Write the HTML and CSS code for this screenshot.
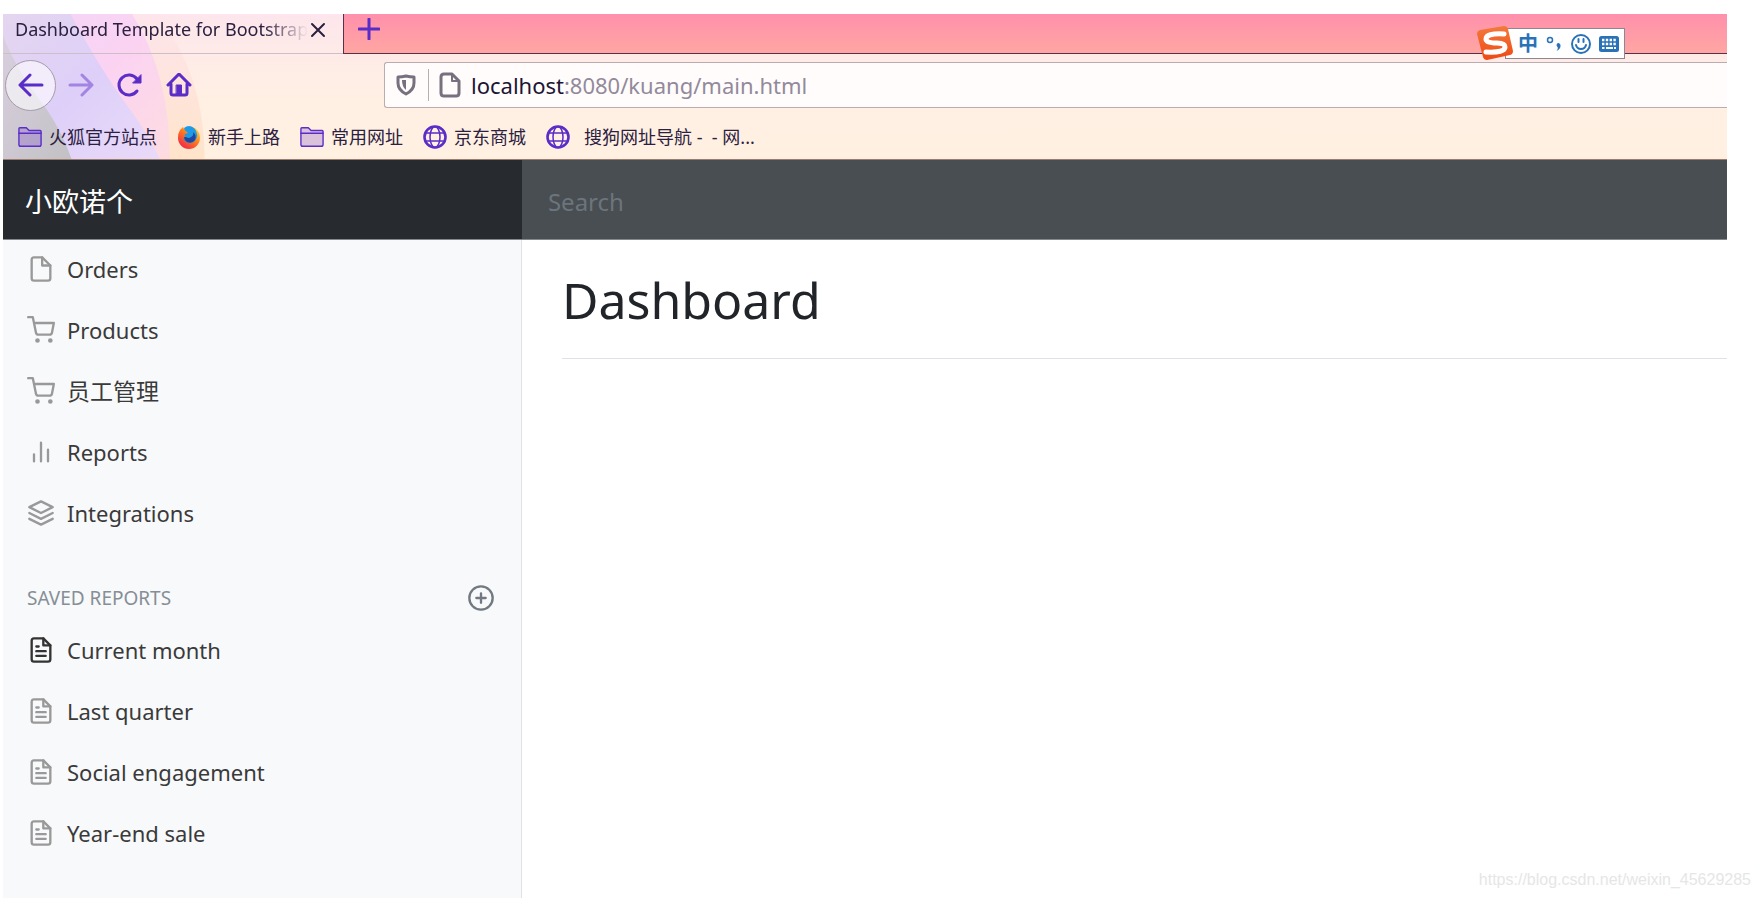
FILE: index.html
```html
<!DOCTYPE html>
<html lang="zh-CN">
<head>
<meta charset="utf-8">
<title>Dashboard Template for Bootstrap</title>
<link rel="stylesheet" href="styles.css">
</head>
<body>
<svg class="sprite" aria-hidden="true">
  <symbol id="file" viewBox="0 0 24 24"><path d="M13 2H6a2 2 0 0 0-2 2v16a2 2 0 0 0 2 2h12a2 2 0 0 0 2-2V9z"/><path d="M13 2v7h7"/></symbol>
  <symbol id="file-text" viewBox="0 0 24 24"><path d="M14 2H6a2 2 0 0 0-2 2v16a2 2 0 0 0 2 2h12a2 2 0 0 0 2-2V8z"/><path d="M14 2v6h6M16 13H8M16 17H8M10 9H8"/></symbol>
  <symbol id="cart" viewBox="0 0 24 24"><circle cx="9" cy="21" r="1"/><circle cx="20" cy="21" r="1"/><path d="M1 1h4l2.700 13.400a2 2 0 0 0 2 1.600h9.700a2 2 0 0 0 2-1.600L23 6H6"/></symbol>
  <symbol id="bars" viewBox="0 0 24 24"><path d="M18 20V10M12 20V4M6 20v-6"/></symbol>
  <symbol id="layers" viewBox="0 0 24 24"><path d="M12 2L2 7l10 5 10-5zM2 17l10 5 10-5M2 12l10 5 10-5"/></symbol>
  <symbol id="plus-circle" viewBox="0 0 24 24"><circle cx="12" cy="12" r="10"/><path d="M12 8v8M8 12h8"/></symbol>
  <symbol id="folder" viewBox="0 0 26 24"><path d="M1 20V3q0-1 1-1h7l3 3h12q1 0 1 1v14q0 2-2 2H3q-2 0-2-2z" fill="#7038c8" fill-opacity=".25"/><path d="M1 8h24"/></symbol>
  <symbol id="globe" viewBox="0 0 24 24"><circle cx="12" cy="12" r="10.500" stroke-width="2.600"/><ellipse cx="12" cy="12" rx="5" ry="10.500"/><path d="M3 8h18M3 16h18"/></symbol>
</svg>

<div class="window">
  <header class="chrome">
    <svg class="theme" viewBox="0 0 400 146" aria-hidden="true">
      <defs>
        <linearGradient id="lav" x2="1" y2="1"><stop offset="0" stop-color="#e4d6ef"/><stop offset=".5" stop-color="#decff9"/><stop offset="1" stop-color="#e9daf9"/></linearGradient>
        <linearGradient id="pink" x2="1" y2="1"><stop offset="0" stop-color="#f2d5f8"/><stop offset=".5" stop-color="#fbd3f2"/><stop offset="1" stop-color="#fddce0"/></linearGradient>
        <linearGradient id="peach" x2="0" y2="1"><stop offset="0" stop-color="#fde5ec"/><stop offset="1" stop-color="#ffe4ca"/></linearGradient>
        <linearGradient id="grey" x2="1" y2="1"><stop offset="0" stop-color="#d9cfdf"/><stop offset="1" stop-color="#c2c1c4"/></linearGradient>
      </defs>
      <path fill="url(#peach)" d="M0 0H155Q203 60 203 146H0z"/>
      <path fill="url(#pink)" d="M0 0H130Q168 60 168 146H0z"/>
      <path fill="url(#lav)" d="M0 0H68Q96 52 122 88Q145 118 158 146H0z"/>
      <path fill="url(#grey)" d="M0 22Q14 58 44 96Q60 120 69 146H0z"/>
    </svg>
    <div class="tabs">
      <div class="tab"><span class="tab-title">Dashboard Template for Bootstrap</span>
        <button class="tab-close" aria-label="Close tab"><svg viewBox="0 0 16 16"><path d="M2 2l12 12M14 2L2 14"/></svg></button>
      </div>
      <div class="tab-strip"><button class="tab-new" aria-label="New tab"><svg viewBox="0 0 22 22"><path d="M11 1v20M1 11h20"/></svg></button></div>
    </div>
    <div class="toolbar">
      <button class="back" aria-label="Back"><svg viewBox="0 0 26 24"><path d="M24 12H3M12 2L2 12l10 10"/></svg></button>
      <button class="nav-button dim" aria-label="Forward"><svg viewBox="0 0 26 24"><path d="M2 12h21M14 2l10 10-10 10"/></svg></button>
      <button class="nav-button" aria-label="Reload"><svg viewBox="0 0 26 24"><path d="M20 18A10 10 0 1 1 20 6"/><path d="M24 2v8h-8z" fill="currentColor" stroke-width="1"/></svg></button>
      <button class="nav-button" aria-label="Home"><svg viewBox="0 0 26 24"><path d="M2 12L13 1l11 11M5 11v9q0 2 2 2h12q2 0 2-2v-9"/><path d="M10.500 12h5v9h-5z" fill="currentColor" stroke-width="1"/></svg></button>
      <div class="address">
        <svg class="shield" viewBox="0 0 20 22"><path d="M10 2Q14 3 18 3v6q0 7-8 11Q2 16 2 9V3q4 0 8-1z"/><path d="M10 6v10Q6 13 6 6z" fill="currentColor" stroke="none"/></svg>
        <span class="divider"></span>
        <svg class="page-icon" viewBox="0 0 22 26"><path d="M13 2H5Q2 2 2 5v16q0 3 3 3h12q3 0 3-3V9z"/><path d="M13 2v7h7" stroke-width="2"/></svg>
        <span class="url"><b>localhost</b>:8080/kuang/main.html</span>
      </div>
    </div>
    <nav class="bookmarks">
      <a href="#"><svg class="line"><use href="#folder"/></svg>火狐官方站点</a>
      <a href="#"><svg viewBox="0 0 24 24"><defs><linearGradient id="fox" x1="1" x2=".2" y2="1"><stop offset="0" stop-color="#ffe83a"/><stop offset=".5" stop-color="#ff7a1c"/><stop offset="1" stop-color="#f0204c"/></linearGradient></defs><path d="M3 5Q1 8 1 13a11 11 0 0 0 22 0q0-6-5-10l-5-1-6 2-1-2z" fill="url(#fox)"/><path d="M7 3Q12-1 17 3q4 4 3 9-2 6-7 6-5 0-7-5l4 1q-3-3-2-5 2 0 3-2-3 0-4-4z" fill="#1d9be8"/><path d="M9 12q3 2 5 0 3-1 2-5 4 3 2 8-3 4-8 2-3-2-3-5z" fill="#21459c"/></svg>新手上路</a>
      <a href="#"><svg class="line"><use href="#folder"/></svg>常用网址</a>
      <a href="#"><svg class="line"><use href="#globe"/></svg>京东商城</a>
      <a href="#" class="spaced"><svg class="line"><use href="#globe"/></svg>搜狗网址导航 -&nbsp; - 网...</a>
    </nav>
  </header>

  <div class="navbar">
    <a class="brand" href="#">小欧诺个</a>
    <input class="search" type="text" placeholder="Search" aria-label="Search">
  </div>

  <div class="content">
    <aside class="sidebar">
      <ul class="menu">
        <li><a href="#"><svg><use href="#file"/></svg>Orders</a></li>
        <li><a href="#"><svg><use href="#cart"/></svg>Products</a></li>
        <li><a class="han" href="#"><svg><use href="#cart"/></svg>员工管理</a></li>
        <li><a href="#"><svg><use href="#bars"/></svg>Reports</a></li>
        <li><a href="#"><svg><use href="#layers"/></svg>Integrations</a></li>
      </ul>
      <h6 class="heading"><span>Saved reports</span><a href="#" aria-label="Add report"><svg><use href="#plus-circle"/></svg></a></h6>
      <ul class="menu">
        <li><a class="current" href="#"><svg><use href="#file-text"/></svg>Current month</a></li>
        <li><a href="#"><svg><use href="#file-text"/></svg>Last quarter</a></li>
        <li><a href="#"><svg><use href="#file-text"/></svg>Social engagement</a></li>
        <li><a href="#"><svg><use href="#file-text"/></svg>Year-end sale</a></li>
      </ul>
    </aside>
    <main class="main"><h1>Dashboard</h1></main>
  </div>
</div>

<div class="ime">
  <svg class="ime-logo" viewBox="0 0 36 36"><defs><linearGradient id="ime" x2="0" y2="1"><stop offset="0" stop-color="#f47a3c"/><stop offset="1" stop-color="#ee4a14"/></linearGradient></defs><path d="M3 5L27 1q3 0 4 3l5 22q0 3-3 4L10 35q-3 0-4-3L0 9q0-3 3-4z" fill="url(#ime)"/><path d="M27 9Q9 8 9 14q0 4 11 4 8 0 8 4 0 6-19 5" fill="none" stroke="#fff" stroke-width="5"/></svg>
  <span class="ime-lang">中</span>
  <svg class="ime-punct" viewBox="0 0 16 16"><circle cx="4" cy="4" r="2.500" fill="none" stroke="currentColor" stroke-width="1.500"/><path d="M12 7a2.500 2.500 0 0 1 2.500 3q0 3-4 5 2-3 1-4a2.300 2.300 0 0 1 .5-4z" fill="currentColor"/></svg>
  <svg class="ime-face" viewBox="0 0 20 20"><circle cx="10" cy="10" r="9"/><path d="M7.500 5v3M12.500 5v3M5 11q1 4 5 4t5-4"/></svg>
  <svg class="ime-keys" viewBox="0 0 20 16"><rect width="20" height="16" rx="2.500" fill="currentColor"/><path d="M3 4h14M3 8h14" stroke="#fff" stroke-width="2.400" stroke-dasharray="2.400 1.400"/><path d="M3 12h2.500M7 12h7M15 12h2" stroke="#fff" stroke-width="2"/></svg>
</div>
<div class="watermark">https://blog.csdn.net/weixin_45629285</div>
</body>
</html>
```
FILE: styles.css
```css
* { box-sizing: border-box; }
body {
  margin: 0;
  background: #fff;
  font-family: "Noto Sans", "Noto Sans CJK SC", sans-serif;
  color: #212529;
}
a { color: inherit; text-decoration: none; }
button { padding: 0; border: 0; background: none; color: inherit; display: flex; align-items: center; justify-content: center; }
svg { fill: none; stroke-linecap: round; stroke-linejoin: round; flex: none; }
.sprite { display: none; }
.window {
  display: flex;
  flex-direction: column;
  min-height: 100vh;
  padding: 14px 33px 0 3px;
}

.chrome {
  position: relative;
  background: linear-gradient(#fde6ec, #fff0e3 60%, #fff0e2);
  border-bottom: 1px solid #9c7c6c;
  color: #5a2cc8;
}
.theme { position: absolute; left: 0; top: 0; height: 100%; }
.tabs, .toolbar, .bookmarks { position: relative; display: flex; }
.tabs { height: 40px; }
.tab {
  display: flex;
  align-items: flex-start;
  width: 340px;
  padding: 0 17px 0 12px;
  border-bottom: 1px solid #cdbfca;
  color: #2b2040;
}
.tab-title {
  flex: 1;
  overflow: hidden;
  white-space: nowrap;
  font-size: 18px;
  line-height: 31px;
  mask-image: linear-gradient(to right, #000 85%, transparent);
}
.tab-close { height: 32px; margin-left: 2px; }
.tab-close svg { width: 16px; height: 16px; stroke: currentColor; stroke-width: 2; }
.tab-strip {
  flex: 1;
  padding-left: 14px;
  background: linear-gradient(#ff90ac, #ffa6a2);
  border-left: 1px solid #57304a;
  border-bottom: 1px solid #57304a;
}
.tab-new { height: 29px; }
.tab-new svg { width: 22px; height: 22px; stroke: currentColor; stroke-width: 3; }

.toolbar { align-items: center; height: 62px; padding-left: 2px; }
.back { width: 51px; height: 51px; border: 1px solid #a49caa; border-radius: 50%; background: rgba(255, 255, 255, .6); }
.back svg, .nav-button svg { width: 26px; height: 24px; stroke: currentColor; stroke-width: 3; }
.nav-button { width: 49px; height: 48px; }
.dim { opacity: .45; }
.address {
  display: flex;
  align-items: center;
  flex: 1;
  height: 46px;
  margin-left: 181px;
  padding-left: 11px;
  background: #fffcfb;
  border: 1px solid #bbacae;
  border-right: 0;
  border-radius: 3px 0 0 3px;
  color: #77717f;
}
.shield { width: 20px; height: 22px; stroke: currentColor; stroke-width: 3; }
.divider { width: 1px; height: 32px; margin: 0 10px 0 12px; background: #b5afb5; }
.page-icon { width: 22px; height: 26px; stroke: currentColor; stroke-width: 3; }
.url { margin-left: 10px; font-size: 22px; line-height: 30px; color: #928a9c; }
.url b { font-weight: 400; color: #201434; }

.bookmarks { align-items: center; gap: 20px; height: 43px; padding: 0 15px 2px; color: #2b2040; font-size: 18px; line-height: 28px; }
.bookmarks a { display: flex; align-items: center; gap: 7px; white-space: nowrap; }
.bookmarks svg { width: 24px; height: 24px; }
.bookmarks .line { stroke: #5a2cc8; stroke-width: 1.5; }
.bookmarks .spaced { gap: 14px; }

.navbar { display: flex; height: 80px; background: #272b2f; border-bottom: 1px solid #85898d; }
.brand { display: flex; align-items: center; width: 30.1%; padding: 4px 0 0 22px; font-size: 27px; line-height: 40px; color: #fff; }
.search {
  flex: 1;
  min-width: 0;
  padding: 4px 26px 0;
  border: 0;
  border-radius: 0;
  background: #494e52;
  color: #fff;
  font: 24px "Noto Sans", sans-serif;
}
.search::placeholder { color: #6c757d; opacity: 1; }

.content { display: flex; flex: 1; }
.sidebar { width: 30.1%; background: #f8f9fb; border-right: 1px solid #dfe1e4; }
.menu { display: flex; flex-direction: column; gap: 4px; margin: 0; padding: 0; list-style: none; }
.menu a { display: flex; align-items: center; gap: 12px; height: 57px; padding-left: 24px; font-size: 22px; line-height: 34px; color: #3a3a3a; }
.menu .han { font-size: 23px; }
.menu svg, .heading svg { width: 28px; height: 28px; stroke: #999; stroke-width: 2; }
.menu .current svg { stroke: #333; }
.heading {
  display: flex;
  align-items: center;
  justify-content: space-between;
  height: 34px;
  margin: 40px 26px 6px 24px;
  font-size: 19px;
  font-weight: 400;
  color: #868e96;
  text-transform: uppercase;
}
.heading a { display: flex; }
.heading svg { stroke: #727980; }
.main { flex: 1; padding-left: 40px; }
.main h1 {
  margin: 0;
  padding: 26px 0 24px;
  border-bottom: 1px solid #dee2e6;
  font-size: 50px;
  font-weight: 400;
  line-height: 68px;
}

.ime {
  position: absolute;
  top: 28px;
  right: 135px;
  display: flex;
  align-items: center;
  justify-content: space-between;
  width: 120px;
  height: 31px;
  padding: 0 5px 0 12px;
  background: #fff;
  border: 1px solid #8c8790;
  color: #2a72b8;
}
.ime-logo { position: absolute; left: -29px; top: -4px; width: 36px; height: 36px; }
.ime-lang { font-size: 20px; font-weight: 700; line-height: 28px; }
.ime-punct { width: 16px; height: 16px; }
.ime-face { width: 20px; height: 20px; stroke: currentColor; stroke-width: 2; }
.ime-keys { width: 20px; height: 16px; }
.ime-keys path { stroke-linecap: butt; }

.watermark {
  position: absolute;
  right: 9px;
  bottom: 8px;
  font: 16px/20px "Liberation Sans", sans-serif;
  color: #e6e6e6;
}
```
